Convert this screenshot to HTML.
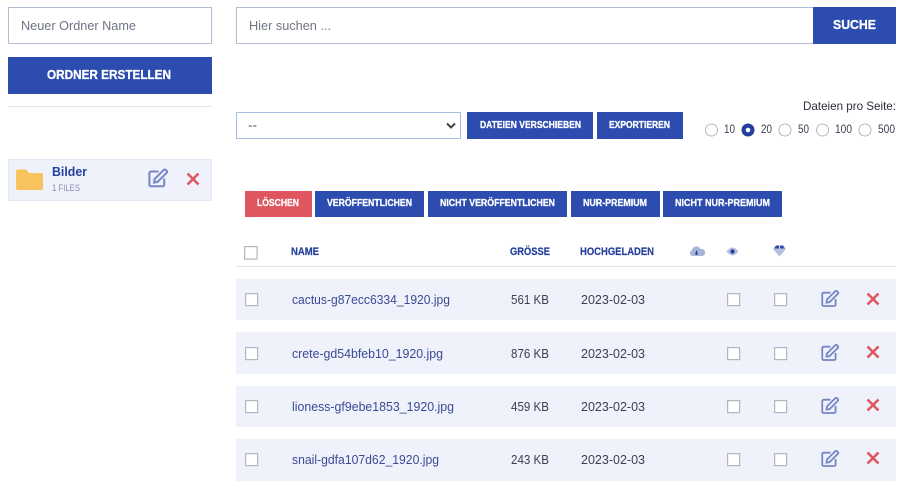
<!DOCTYPE html>
<html lang="de"><head><meta charset="utf-8"><title>Dateien</title>
<style>
html,body{margin:0;padding:0;background:#fff;width:904px;height:492px;overflow:hidden}
.b{position:absolute;box-sizing:border-box}
.blue{background:#2d4cb0}
.row{position:absolute;left:236px;width:660px;background:#eff2fa}
svg{position:absolute;left:0;top:0}
text{font-family:"Liberation Sans",sans-serif}
.w{fill:#fff;font-weight:700;stroke:#fff;stroke-width:.3}
.f{fill:#3b4a95;font-size:13px}
.d{fill:#3a3f55;font-size:12.5px}
.h{fill:#24409c;font-weight:700;font-size:11px;stroke:#24409c;stroke-width:.2}
.p{fill:#6f7486;font-size:13px}
.cb{fill:#fff;stroke:#b2b6c0;stroke-width:1.2}
.r{fill:#fff;stroke:#b5b8bf;stroke-width:1}
.l{fill:#3d4152;font-size:11.5px}
</style></head><body>
<div class="b" style="left:8px;top:7px;width:204px;height:37px;border:1px solid #b4bdd8"></div>
<div class="b blue" style="left:8px;top:57px;width:204px;height:37px"></div>
<div class="b" style="left:8px;top:106px;width:204px;height:1px;background:#e4e5ea"></div>
<div class="b" style="left:8px;top:159px;width:204px;height:42px;background:#eff2fa;border:1px solid #e3e7f3"></div>
<div class="b" style="left:236px;top:7px;width:578px;height:37px;border:1px solid #b4bdd8"></div>
<div class="b blue" style="left:813px;top:7px;width:83px;height:37px"></div>
<div class="b" style="left:236px;top:112px;width:225px;height:27px;border:1px solid #a9bde3"></div>
<div class="b blue" style="left:467px;top:112px;width:126px;height:27px"></div>
<div class="b blue" style="left:597px;top:112px;width:86px;height:27px"></div>
<div class="b" style="left:245px;top:191px;width:67px;height:26px;background:#e0565f"></div>
<div class="b blue" style="left:315px;top:191px;width:109px;height:26px"></div>
<div class="b blue" style="left:428px;top:191px;width:139px;height:26px"></div>
<div class="b blue" style="left:571px;top:191px;width:89px;height:26px"></div>
<div class="b blue" style="left:663px;top:191px;width:119px;height:26px"></div>
<div class="b" style="left:236px;top:266px;width:660px;height:1px;background:#e0e2e8"></div>
<div class="row" style="top:279px;height:41px"></div>
<div class="row" style="top:332px;height:42px"></div>
<div class="row" style="top:386px;height:41px"></div>
<div class="row" style="top:439px;height:42px"></div>
<svg width="904" height="492" viewBox="0 0 904 492" xmlns="http://www.w3.org/2000/svg">
<defs>
<g id="edit" fill="none" stroke="#7686c4" stroke-width="2">
<path d="M10.5 3H3a1.6 1.6 0 0 0-1.6 1.600v11.600A1.600 1.600 0 0 0 3 17.800h11.600a1.600 1.600 0 0 0 1.600-1.600V10"/>
<path d="M6.600 10.600 15.800 1.400a1.400 1.400 0 0 1 2 0l.9.9a1.400 1.400 0 0 1 0 2L9.500 13.500l-3.400.6z"/>
</g>
<path id="x" d="M1.500 1.500 12.500 12.500M12.500 1.500 1.500 12.500" stroke="#e0565f" stroke-width="2.600" fill="none"/>
<g id="cbs">
<rect class="cb" x="245.600" y="0.600" width="12" height="12"/>
<rect class="cb" x="727.600" y="0.600" width="12" height="12"/>
<rect class="cb" x="774.600" y="0.600" width="12" height="12"/>
</g>
</defs>

<text class="p" x="21" y="30" textLength="115" lengthAdjust="spacingAndGlyphs">Neuer Ordner Name</text>
<text class="w" x="47" y="79" font-size="13" textLength="124" lengthAdjust="spacingAndGlyphs">ORDNER ERSTELLEN</text>
<text class="p" x="249" y="30" textLength="82" lengthAdjust="spacingAndGlyphs">Hier suchen ...</text>
<text class="w" x="833" y="29" font-size="13" textLength="43" lengthAdjust="spacingAndGlyphs">SUCHE</text>

<text x="248" y="129" font-size="12" fill="#444" textLength="9" lengthAdjust="spacingAndGlyphs">--</text>
<path d="M447 123.500 451 127.500 455 123.500" fill="none" stroke="#444" stroke-width="2"/>
<text class="w" x="480" y="128" font-size="10" textLength="101" lengthAdjust="spacingAndGlyphs">DATEIEN VERSCHIEBEN</text>
<text class="w" x="609" y="128" font-size="10" textLength="61" lengthAdjust="spacingAndGlyphs">EXPORTIEREN</text>

<text x="803" y="110" font-size="12" fill="#2b2d3a" textLength="93" lengthAdjust="spacingAndGlyphs">Dateien pro Seite:</text>
<circle class="r" cx="711.500" cy="130" r="6"/>
<circle cx="748" cy="130" r="6.500" fill="#24409c"/><circle cx="748" cy="130" r="2.300" fill="#fff"/>
<circle class="r" cx="785" cy="130" r="6"/>
<circle class="r" cx="822.500" cy="130" r="6"/>
<circle class="r" cx="865" cy="130" r="6"/>
<text class="l" x="724" y="133" textLength="11" lengthAdjust="spacingAndGlyphs">10</text>
<text class="l" x="761" y="133" textLength="11" lengthAdjust="spacingAndGlyphs">20</text>
<text class="l" x="798" y="133" textLength="11" lengthAdjust="spacingAndGlyphs">50</text>
<text class="l" x="835" y="133" textLength="17" lengthAdjust="spacingAndGlyphs">100</text>
<text class="l" x="878" y="133" textLength="17" lengthAdjust="spacingAndGlyphs">500</text>

<text class="w" x="257" y="206" font-size="10" textLength="42" lengthAdjust="spacingAndGlyphs">LÖSCHEN</text>
<text class="w" x="327" y="206" font-size="10" textLength="85" lengthAdjust="spacingAndGlyphs">VERÖFFENTLICHEN</text>
<text class="w" x="440" y="206" font-size="10" textLength="115" lengthAdjust="spacingAndGlyphs">NICHT VERÖFFENTLICHEN</text>
<text class="w" x="583" y="206" font-size="10" textLength="64" lengthAdjust="spacingAndGlyphs">NUR-PREMIUM</text>
<text class="w" x="675" y="206" font-size="10" textLength="95" lengthAdjust="spacingAndGlyphs">NICHT NUR-PREMIUM</text>

<!-- folder -->
<path d="M16 171.500a2 2 0 0 1 2-2h8l3.500 3.500H41a2 2 0 0 1 2 2V188a2 2 0 0 1-2 2H18a2 2 0 0 1-2-2z" fill="#f8c35c"/>
<text x="52" y="176" font-size="12.500" font-weight="700" fill="#24409c" textLength="35" lengthAdjust="spacingAndGlyphs">Bilder</text>
<text x="52" y="191" font-size="9" fill="#8b90b0" textLength="28" lengthAdjust="spacingAndGlyphs">1 FILES</text>
<use href="#edit" x="148" y="168.500"/>
<use href="#x" x="186" y="172"/>

<!-- header -->
<rect class="cb" x="244.600" y="246.600" width="12.500" height="12.500"/>
<text class="h" x="291" y="255" textLength="28" lengthAdjust="spacingAndGlyphs">NAME</text>
<text class="h" x="510" y="255" textLength="40" lengthAdjust="spacingAndGlyphs">GRÖSSE</text>
<text class="h" x="580" y="255" textLength="74" lengthAdjust="spacingAndGlyphs">HOCHGELADEN</text>
<!-- cloud -->
<path d="M692.500 256a3 3 0 0 1-.5-5.800 4.500 4.500 0 0 1 8.500-1.200 3.500 3.500 0 0 1 2 7z" fill="#a9b4da"/>
<path d="M696.500 250.500v3.500M695 252.700l1.500 1.700 1.500-1.700" stroke="#24409c" stroke-width="1" fill="none"/>
<!-- eye -->
<path d="M726.500 251.500q6-8 12 0q-6 8-12 0z" fill="#b6bfe0"/>
<circle cx="732.500" cy="251.500" r="2.100" fill="#24409c"/>
<!-- gem -->
<path d="M773 249l2.500-3.500h8l2.500 3.500-6.500 7.500z" fill="#b6bfe0"/>
<path d="M776 245.500h7l1.500 3h-10z" fill="#2f4aa8"/>
<path d="M779.500 245.500v3" stroke="#fff" stroke-width=".8"/>

<!-- rows -->
<use href="#cbs" y="293"/><use href="#edit" transform="translate(821 290) scale(.9)"/><use href="#x" x="866" y="292"/>
<text class="f" x="292" y="304" textLength="158" lengthAdjust="spacingAndGlyphs">cactus-g87ecc6334_1920.jpg</text>
<text class="d" x="511" y="304" textLength="38" lengthAdjust="spacingAndGlyphs">561 KB</text>
<text class="d" x="581" y="304" textLength="64" lengthAdjust="spacingAndGlyphs">2023-02-03</text>

<use href="#cbs" y="347"/><use href="#edit" transform="translate(821 344) scale(.9)"/><use href="#x" x="866" y="345"/>
<text class="f" x="292" y="358" textLength="151" lengthAdjust="spacingAndGlyphs">crete-gd54bfeb10_1920.jpg</text>
<text class="d" x="511" y="358" textLength="38" lengthAdjust="spacingAndGlyphs">876 KB</text>
<text class="d" x="581" y="358" textLength="64" lengthAdjust="spacingAndGlyphs">2023-02-03</text>

<use href="#cbs" y="400"/><use href="#edit" transform="translate(821 397) scale(.9)"/><use href="#x" x="866" y="398"/>
<text class="f" x="292" y="411" textLength="162" lengthAdjust="spacingAndGlyphs">lioness-gf9ebe1853_1920.jpg</text>
<text class="d" x="511" y="411" textLength="38" lengthAdjust="spacingAndGlyphs">459 KB</text>
<text class="d" x="581" y="411" textLength="64" lengthAdjust="spacingAndGlyphs">2023-02-03</text>

<use href="#cbs" y="453"/><use href="#edit" transform="translate(821 450) scale(.9)"/><use href="#x" x="866" y="451"/>
<text class="f" x="292" y="464" textLength="147" lengthAdjust="spacingAndGlyphs">snail-gdfa107d62_1920.jpg</text>
<text class="d" x="511" y="464" textLength="38" lengthAdjust="spacingAndGlyphs">243 KB</text>
<text class="d" x="581" y="464" textLength="64" lengthAdjust="spacingAndGlyphs">2023-02-03</text>
</svg>
</body></html>
